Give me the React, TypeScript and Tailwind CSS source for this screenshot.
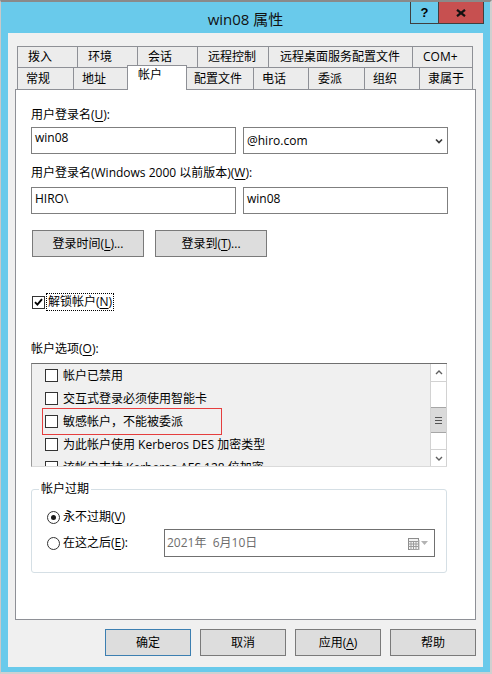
import React from 'react';

type Tab = { label: string; cls: string };

// two rows of property-sheet tabs; widths are fixed so each row fills the sheet
const topRow: Tab[] = [
  { label: '拨入', cls: 'w-[60px] pl-[10px] border-l' },
  { label: '环境', cls: 'w-[60px] pl-[10px] border-l' },
  { label: '会话', cls: 'w-[60px] pl-[10px] border-l' },
  { label: '远程控制', cls: 'w-[71px] pl-[10px] border-l' },
  { label: '远程桌面服务配置文件', cls: 'w-[144px] pl-[11px] border-l' },
  { label: 'COM+', cls: 'w-[61px] pl-[10px] border-l border-r' },
];

const bottomRow: Tab[] = [
  { label: '常规', cls: 'w-[56px] pl-[8px] border-l' },
  { label: '地址', cls: 'w-[54px] pl-[8px] border-l' },
  { label: '帐户', cls: 'w-[60px]' },
  { label: '配置文件', cls: 'w-[66px] pl-[7px]' },
  { label: '电话', cls: 'w-[55px] pl-[8px] border-l' },
  { label: '委派', cls: 'w-[56px] pl-[9px] border-l' },
  { label: '组织', cls: 'w-[55px] pl-[8px] border-l' },
  { label: '隶属于', cls: 'w-[54px] pl-[8px] border-l border-r' },
];

const options = [
  '帐户已禁用',
  '交互式登录必须使用智能卡',
  '敏感帐户，不能被委派',
  '为此帐户使用 Kerberos DES 加密类型',
  '该帐户支持 Kerberos AES 128 位加密。',
];

const Key = ({ k }: { k: string }) => <span className="underline underline-offset-[2px]">{k}</span>;

const CheckBox = ({ checked = false }: { checked?: boolean }) => (
  <span className="w-[13px] h-[13px] shrink-0 border border-[#333333] bg-white flex items-center justify-center">
    {checked && (
      <svg width="9" height="8" viewBox="0 0 9 8">
        <path d="M1 4.2 L3.4 6.6 L8 1.2" fill="none" stroke="#000" strokeWidth="1.9" />
      </svg>
    )}
  </span>
);

const Radio = ({ on = false }: { on?: boolean }) => (
  <span className="w-[13px] h-[13px] shrink-0 rounded-full border border-[#333333] bg-white flex items-center justify-center">
    {on && <span className="w-[5px] h-[5px] rounded-full bg-[#1a1a1a]" />}
  </span>
);

const Button = ({ children, primary = false, cls = '' }: { children: React.ReactNode; primary?: boolean; cls?: string }) => (
  <div
    className={`h-[27px] flex items-center justify-center bg-[#dddddd] border leading-4 ${
      primary ? 'border-[#3c7fb1]' : 'border-[#7a7a7a]'
    } ${cls}`}
  >
    {children}
  </div>
);

const Chevron = ({ up = false }: { up?: boolean }) => (
  <svg width="8" height="5" viewBox="0 0 8 5">
    <path d={up ? 'M1 4 L4 1 L7 4' : 'M1 1 L4 4 L7 1'} fill="none" stroke="#606060" strokeWidth="1.4" />
  </svg>
);

const App: React.FC = () => {
  return (
    <div className="w-[492px] h-[674px] flex flex-col bg-[#69caeb] border-t-2 border-t-[#8a8a8a] border-l border-r-2 border-b-2 border-l-[#c9c9c9] border-r-[#d0d0d0] border-b-[#d0d0d0] text-[12px] leading-4 text-black font-['Open_Sans','Noto_Sans_CJK_SC',sans-serif]">
      {/* title bar */}
      <div className="h-[31px] shrink-0 grid grid-cols-[1fr_auto_1fr]">
        <div />
        <div className="flex items-center pt-[3px] text-[15px] leading-5 text-[#111111]">win08 属性</div>
        <div className="flex justify-end items-start pr-[6px]">
          <div className="w-[28px] h-[22px] border border-r-0 border-t-0 border-[#3f3f3f] flex items-center justify-center font-['Liberation_Sans',sans-serif] font-bold text-[13px] leading-none">
            ?
          </div>
          <div className="w-[46px] h-[22px] border border-t-0 border-[#3f3f3f] bg-[#c75050] flex items-center justify-center">
            <svg width="10" height="8" viewBox="0 0 10 8">
              <path d="M1 0.8 L9 7.2 M9 0.8 L1 7.2" stroke="#111" strokeWidth="2.2" />
            </svg>
          </div>
        </div>
      </div>

      {/* client area */}
      <div className="mx-[7px] flex-1 bg-[#f0f0f0] flex flex-col pt-[13px]">
        <div className="ml-[9px] flex h-[21px]">
          {topRow.map(t => (
            <div key={t.label} className={`h-[21px] flex items-center border-t border-[#8e9096] bg-[#ececec] ${t.cls}`}>
              {t.label}
            </div>
          ))}
        </div>
        <div className="ml-[9px] flex items-start h-[22px]">
          {bottomRow.map(t =>
            t.label === '帐户' ? (
              <div
                key={t.label}
                className={`relative z-10 -mt-[2px] h-[25px] bg-white border-l border-t border-r border-[#8e9096] pl-[10px] pt-[1px] ${t.cls}`}
              >
                {t.label}
              </div>
            ) : (
              <div key={t.label} className={`h-[22px] flex items-center border-t border-[#8e9096] bg-[#ececec] ${t.cls}`}>
                {t.label}
              </div>
            )
          )}
        </div>

        {/* account page */}
        <div className="mx-[7px] h-[531px] shrink-0 bg-white border border-[#8e9096] pl-[15px] pt-[17px] flex flex-col">
          <div className="h-4">
            用户登录名(<Key k="U" />):
          </div>
          <div className="mt-[4px] flex gap-[7px]">
            <div className="w-[205px] h-[27px] border border-[#7f7f7f] pl-[3px] pt-[2px]">win08</div>
            <div className="w-[205px] h-[27px] border border-[#7f7f7f] pl-[3px] pr-[4px] flex items-center justify-between">
              <span>@hiro.com</span>
              <svg width="8" height="6" viewBox="0 0 8 6">
                <path d="M1 1.5 L4 4.5 L7 1.5" fill="none" stroke="#3a3a3a" strokeWidth="1.7" />
              </svg>
            </div>
          </div>

          <div className="mt-[11px] h-4">
            用户登录名(Windows 2000 以前版本)(<Key k="W" />):
          </div>
          <div className="mt-[6px] flex gap-[7px]">
            <div className="w-[205px] h-[27px] border border-[#7f7f7f] pl-[3px] pt-[3px]">HIRO\</div>
            <div className="w-[205px] h-[27px] border border-[#7f7f7f] pl-[3px] pt-[3px]">win08</div>
          </div>

          <div className="mt-[16px] ml-[1px] flex gap-[11px]">
            <Button cls="w-[112px]">
              登录时间(<Key k="L" />)...
            </Button>
            <Button cls="w-[112px]">
              登录到(<Key k="T" />)...
            </Button>
          </div>

          <div className="mt-[36px] ml-[1px] h-[18px] flex items-center">
            <CheckBox checked />
            <span className="ml-[1px] h-[18px] flex items-center px-[1px] border border-dotted border-black">
              解锁帐户(<Key k="N" />)
            </span>
          </div>

          <div className="mt-[30px] h-4">
            帐户选项(<Key k="O" />):
          </div>
          <div className="mt-[6px] w-[416px] h-[104px] flex bg-[#f0f0f0] border-t border-t-[#6f6f6f] border-l border-l-[#9a9a9a] border-b border-b-[#dadada]">
            <div className="flex-1 overflow-hidden">
              {options.map((o, i) =>
                i === 2 ? (
                  <div key={o} className="h-[23px] flex items-center">
                    <div className="ml-[10px] w-[180px] h-[27px] border border-[#e53e3e] pl-[2px] flex items-center gap-[5px]">
                      <CheckBox />
                      <span className="whitespace-nowrap">{o}</span>
                    </div>
                  </div>
                ) : (
                  <div key={o} className="h-[23px] flex items-center pl-[13px] gap-[5px]">
                    <CheckBox />
                    <span className="whitespace-nowrap">{o}</span>
                  </div>
                )
              )}
            </div>
            {/* vertical scrollbar */}
            <div className="w-[17px] shrink-0 flex flex-col bg-white border-x border-[#d2d2d2]">
              <div className="h-[18px] border-b border-[#d2d2d2] flex items-center justify-center">
                <Chevron up />
              </div>
              <div className="flex-1">
                <div className="mt-[25px] h-[26px] bg-[#dadada] border-y border-[#a6a6a6] flex flex-col items-center justify-center gap-[2px]">
                  <span className="w-[7px] h-[1px] bg-[#555555]" />
                  <span className="w-[7px] h-[1px] bg-[#555555]" />
                  <span className="w-[7px] h-[1px] bg-[#555555]" />
                </div>
              </div>
              <div className="h-[17px] border-t border-[#d2d2d2] flex items-center justify-center">
                <Chevron />
              </div>
            </div>
          </div>

          <fieldset className="mt-[14px] w-[416px] border border-[#d5dfe5] rounded-[3px] pb-[15px]">
            <legend className="ml-[7px] px-[2px] leading-4">帐户过期</legend>
            <div className="mt-[10px] h-[20px] pl-[15px] flex items-center gap-[3px]">
              <Radio on />
              <span>
                永不过期(<Key k="V" />)
              </span>
            </div>
            <div className="mt-[2px] h-[28px] pl-[15px] flex items-center gap-[3px]">
              <Radio />
              <span className="w-[98px]">
                在这之后(<Key k="E" />):
              </span>
              <div className="w-[271px] h-[28px] border border-[#707070] pl-[2px] pr-[6px] flex items-center justify-between text-[#6d6d6d]">
                <span className="whitespace-pre">2021年  6月10日</span>
                <span className="flex items-center gap-[1px]">
                  <svg width="12" height="13" viewBox="0 0 12 13">
                    <rect x="0.5" y="1.5" width="10" height="11" fill="#f4f4f4" stroke="#8c8c8c" />
                    <path d="M0.5 4.5 H10.5 M0.5 7 H10.5 M0.5 9.5 H10.5 M3 4.5 V12.5 M5.5 4.5 V12.5 M8 4.5 V12.5" stroke="#9c9c9c" />
                    <path d="M11 3 V13 H2" fill="none" stroke="#b5b5b5" />
                  </svg>
                  <svg width="7" height="4" viewBox="0 0 7 4">
                    <path d="M0 0 H7 L3.5 4 Z" fill="#b3b3b3" />
                  </svg>
                </span>
              </div>
            </div>
          </fieldset>
        </div>

        <div className="mt-[9px] mr-[7px] flex justify-end gap-[9px]">
          <Button primary cls="w-[86px]">确定</Button>
          <Button cls="w-[86px]">取消</Button>
          <Button cls="w-[86px]">
            应用(<Key k="A" />)
          </Button>
          <Button cls="w-[86px]">帮助</Button>
        </div>
      </div>
      <div className="h-[5px] shrink-0" />
    </div>
  );
};

export default App;
